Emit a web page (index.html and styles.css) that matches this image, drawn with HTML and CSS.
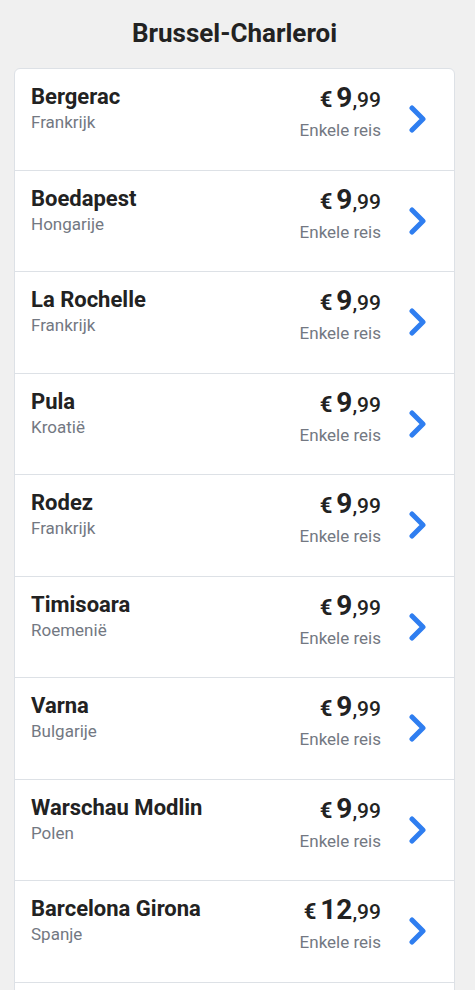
FILE: index.html
```html
<!DOCTYPE html>
<html lang="nl">
<head>
<meta charset="utf-8">
<title>Brussel-Charleroi</title>
<link rel="stylesheet" href="styles.css">
</head>
<body>
<div class="page">
  <h1 class="title">Brussel-Charleroi</h1>
  <ul class="list">
    <li class="row">
      <div class="dest"><div class="name">Bergerac</div><div class="country">Frankrijk</div></div>
      <div class="price"><div class="amount"><span class="cur">€</span> <span class="int">9</span><span class="dec">,99</span></div><div class="type">Enkele reis</div></div>
      <svg class="chev" viewBox="0 0 20 28"><polyline points="4,3 15,14 4,25"/></svg>
    </li>
    <li class="row">
      <div class="dest"><div class="name">Boedapest</div><div class="country">Hongarije</div></div>
      <div class="price"><div class="amount"><span class="cur">€</span> <span class="int">9</span><span class="dec">,99</span></div><div class="type">Enkele reis</div></div>
      <svg class="chev" viewBox="0 0 20 28"><polyline points="4,3 15,14 4,25"/></svg>
    </li>
    <li class="row">
      <div class="dest"><div class="name">La Rochelle</div><div class="country">Frankrijk</div></div>
      <div class="price"><div class="amount"><span class="cur">€</span> <span class="int">9</span><span class="dec">,99</span></div><div class="type">Enkele reis</div></div>
      <svg class="chev" viewBox="0 0 20 28"><polyline points="4,3 15,14 4,25"/></svg>
    </li>
    <li class="row">
      <div class="dest"><div class="name">Pula</div><div class="country">Kroatië</div></div>
      <div class="price"><div class="amount"><span class="cur">€</span> <span class="int">9</span><span class="dec">,99</span></div><div class="type">Enkele reis</div></div>
      <svg class="chev" viewBox="0 0 20 28"><polyline points="4,3 15,14 4,25"/></svg>
    </li>
    <li class="row">
      <div class="dest"><div class="name">Rodez</div><div class="country">Frankrijk</div></div>
      <div class="price"><div class="amount"><span class="cur">€</span> <span class="int">9</span><span class="dec">,99</span></div><div class="type">Enkele reis</div></div>
      <svg class="chev" viewBox="0 0 20 28"><polyline points="4,3 15,14 4,25"/></svg>
    </li>
    <li class="row">
      <div class="dest"><div class="name">Timisoara</div><div class="country">Roemenië</div></div>
      <div class="price"><div class="amount"><span class="cur">€</span> <span class="int">9</span><span class="dec">,99</span></div><div class="type">Enkele reis</div></div>
      <svg class="chev" viewBox="0 0 20 28"><polyline points="4,3 15,14 4,25"/></svg>
    </li>
    <li class="row">
      <div class="dest"><div class="name">Varna</div><div class="country">Bulgarije</div></div>
      <div class="price"><div class="amount"><span class="cur">€</span> <span class="int">9</span><span class="dec">,99</span></div><div class="type">Enkele reis</div></div>
      <svg class="chev" viewBox="0 0 20 28"><polyline points="4,3 15,14 4,25"/></svg>
    </li>
    <li class="row">
      <div class="dest"><div class="name">Warschau Modlin</div><div class="country">Polen</div></div>
      <div class="price"><div class="amount"><span class="cur">€</span> <span class="int">9</span><span class="dec">,99</span></div><div class="type">Enkele reis</div></div>
      <svg class="chev" viewBox="0 0 20 28"><polyline points="4,3 15,14 4,25"/></svg>
    </li>
    <li class="row">
      <div class="dest"><div class="name">Barcelona Girona</div><div class="country">Spanje</div></div>
      <div class="price"><div class="amount"><span class="cur">€</span> <span class="int">12</span><span class="dec">,99</span></div><div class="type">Enkele reis</div></div>
      <svg class="chev" viewBox="0 0 20 28"><polyline points="4,3 15,14 4,25"/></svg>
    </li>
    <li class="row row-empty"></li>
  </ul>
</div>
</body>
</html>
```

FILE: styles.css
```css
html, body {
  margin: 0;
  padding: 0;
  background: #f0f0f0;
  font-family: Roboto, "Liberation Sans", Arial, sans-serif;
  color: #222;
}
.page {
  width: 441px;
  margin-left: 14px;
}
.title {
  margin: 0;
  height: 68px;
  display: flex;
  align-items: center;
  justify-content: center;
  font-size: 26px;
  font-weight: 700;
  color: #222;
  padding-bottom: 2px;
  box-sizing: border-box;
}
.list {
  list-style: none;
  margin: 0;
  padding: 0;
  background: #fff;
  border: 1px solid #dde1e6;
  border-radius: 6px;
}
.row {
  display: flex;
  align-items: flex-start;
  height: 101.5px;
  padding: 15px 28px 0 16px;
  box-sizing: border-box;
  border-bottom: 1px solid #dde1e6;
}
.row:last-child { border-bottom: none; }
.dest { flex: 1; }
.name {
  font-size: 22px;
  font-weight: 700;
  line-height: 26px;
  color: #222;
}
.country {
  font-size: 17px;
  line-height: 22px;
  color: #737882;
  margin-top: 1px;
}
.price {
  text-align: right;
}
.amount {
  font-weight: 700;
  line-height: 28px;
  color: #222;
  white-space: nowrap;
}
.cur { font-size: 22px; }
.int { font-size: 28px; }
.dec { font-size: 21px; font-weight: 500; }
.type {
  font-size: 17px;
  line-height: 22px;
  color: #737882;
  margin-top: 3px;
}
.chev {
  width: 20px;
  height: 28px;
  margin-left: 27px;
  margin-right: -2px;
  align-self: center;
  margin-top: -15px;
  fill: none;
  stroke: #2f7ef0;
  stroke-width: 5;
  stroke-linecap: round;
  stroke-linejoin: round;
}
```
